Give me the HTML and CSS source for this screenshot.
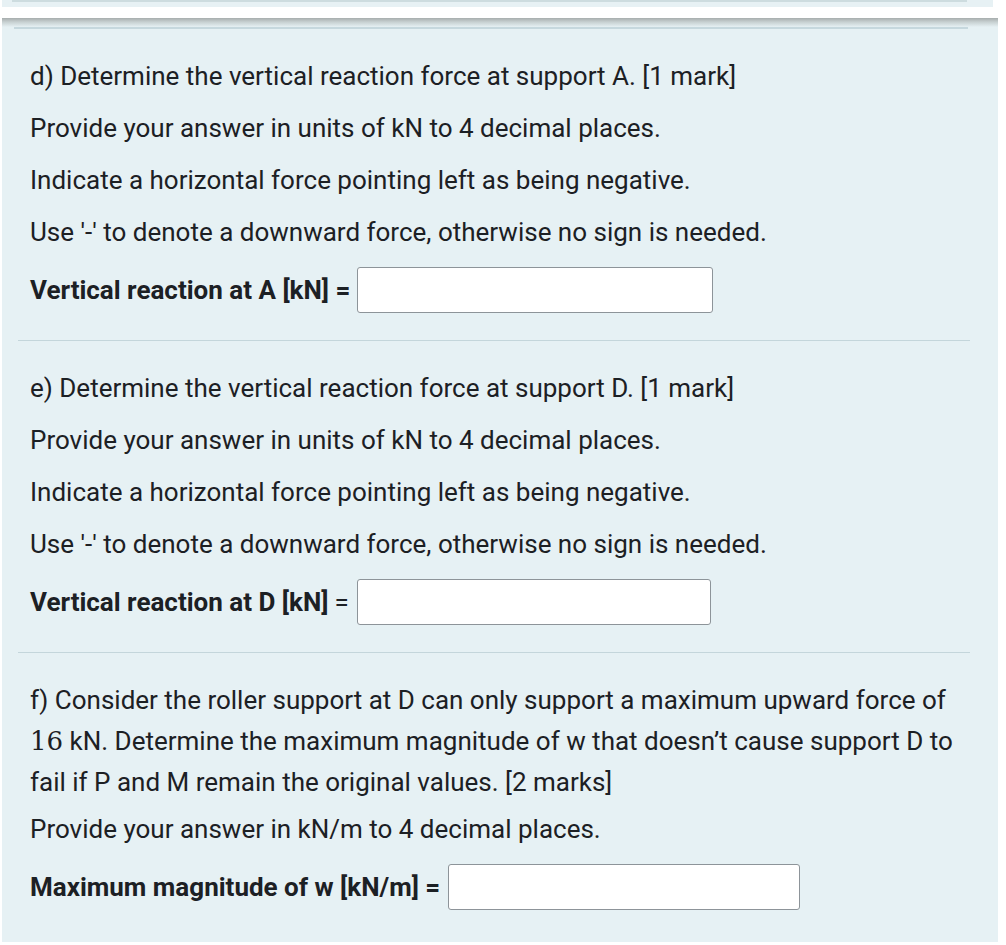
FILE: index.html
```html
<!DOCTYPE html>
<html>
<head>
<meta charset="utf-8">
<link rel="stylesheet" href="styles.css">
</head>
<body>
<div class="prev-panel"><div class="prev-rule"></div></div>
<div class="panel">
  <div class="top-rule"></div>
  <section class="part">
    <p>d) Determine the vertical reaction force at support A. [1 mark]</p>
    <p>Provide your answer in units of kN to 4 decimal places.</p>
    <p>Indicate a horizontal force pointing left as being negative.</p>
    <p>Use '-' to denote a downward force, otherwise no sign is needed.</p>
    <div class="answer"><label class="lbl">Vertical reaction at A [kN] =</label><input class="box" type="text"></div>
  </section>
  <hr class="sep">
  <section class="part">
    <p>e) Determine the vertical reaction force at support D. [1 mark]</p>
    <p>Provide your answer in units of kN to 4 decimal places.</p>
    <p>Indicate a horizontal force pointing left as being negative.</p>
    <p>Use '-' to denote a downward force, otherwise no sign is needed.</p>
    <div class="answer"><label class="lbl">Vertical reaction at D [kN]</label><span class="eq">=</span><input class="box box-d" type="text"></div>
  </section>
  <hr class="sep">
  <section class="part last">
    <p class="wrap">f) Consider the roller support at D can only support a maximum upward force of <span class="math">16</span> kN. Determine the maximum magnitude of w that doesn’t cause support D to fail if P and M remain the original values. [2 marks]</p>
    <p class="after-wrap">Provide your answer in kN/m to 4 decimal places.</p>
    <div class="answer"><label class="lbl">Maximum magnitude of w [kN/m] =</label><input class="box box-w" type="text"></div>
  </section>
</div>
</body>
</html>
```
FILE: styles.css
```css
html, body {
  margin: 0;
  padding: 0;
  background: #ffffff;
}
body {
  font-family: Roboto, "Liberation Sans", sans-serif;
  color: #1c2024;
  width: 1006px;
  height: 945px;
  overflow: hidden;
}
.prev-panel {
  margin: 0 13px 0 2px;
  height: 7px;
  background: #e7f1f4;
  box-sizing: border-box;
  padding: 0 26px 0 10px;
}
.prev-rule {
  height: 2px;
  background: #cddcdf;
}
.panel {
  margin: 11px 8px 0 2px;
  background: #e6f1f4;
  background-image: linear-gradient(to bottom, #a7adad 0px, #c7d0d1 4px, #e6f1f4 9px, #e6f1f4 100%);
  padding-top: 9px;
  height: 924px;
  box-sizing: border-box;
}
.top-rule {
  height: 2px;
  margin: 0 30px 0 12px;
  background: #c6d8de;
}
.part {
  padding: 27px 28px 27px 28px;
}
.part.last {
  padding-bottom: 0;
}
.part p {
  margin: 0 0 11px 0;
  font-size: 26px;
  line-height: 41px;
}
.part p.wrap {
  margin-bottom: 6px;
}
.math {
  font-family: "DejaVu Serif", "Liberation Serif", serif;
  font-size: 26px;
  line-height: 1;
}
.answer {
  display: flex;
  align-items: center;
  margin-top: 14px;
  height: 46px;
}
.lbl {
  font-size: 26px;
  font-weight: 700;
}
.eq {
  font-size: 26px;
  margin-left: 6px;
}
.box {
  width: 356px;
  height: 46px;
  margin-left: 7px;
  box-sizing: border-box;
  border: 1px solid #8d9499;
  border-radius: 3px;
  background: #ffffff;
  padding: 0;
}
.box-d {
  margin-left: 8px;
  width: 354px;
}
.box-w {
  margin-left: 8px;
  width: 352px;
}
.sep {
  margin: 0 28px 0 16px;
  border: 0;
  height: 1px;
  background: #c4d6db;
}
```
